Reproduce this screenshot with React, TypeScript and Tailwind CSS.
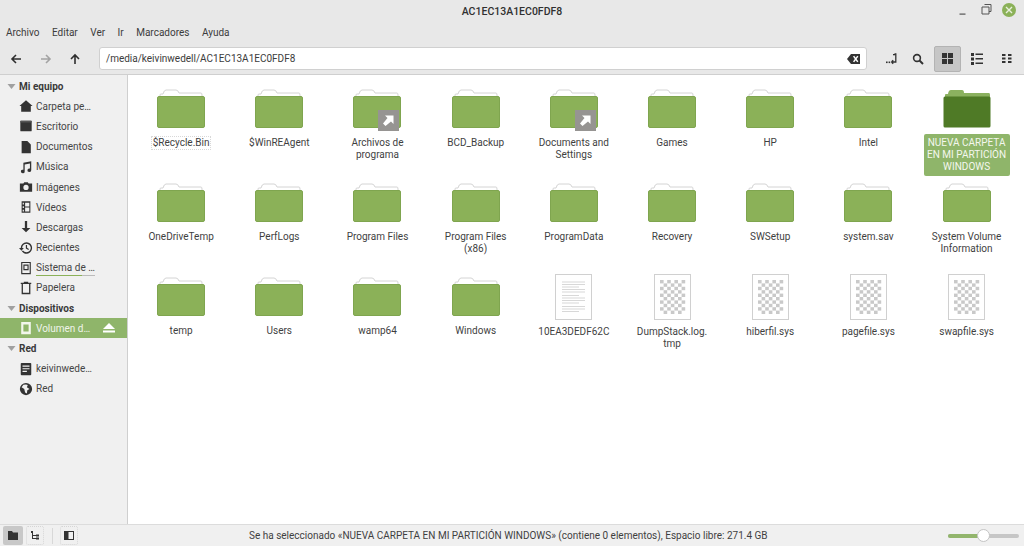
import React from "react";

const I = ({ children, size = 14, className = "" }: { children: React.ReactNode; size?: number; className?: string }) => (
  <svg width={size} height={size} viewBox="0 0 16 16" fill="currentColor" className={"shrink-0 " + className}>
    {children}
  </svg>
);

const Folder = ({ link, selected }: { link?: boolean; selected?: boolean }) => (
  <div className="relative w-[48px] h-[39px] shrink-0">
    <svg width="48" height="39" viewBox="0 0 48 39">
      {selected ? (
        <>
          <path d="M2 9 V6 Q2 5 3 5 H5 Q5.5 1 8 1 H19 Q21 1 21 4 H46 Q47 4 47 6 V10 H2 Z" fill="#8bb15f" />
          <rect x="0.5" y="7.5" width="47" height="31" rx="1.5" fill="#4f7a26" />
        </>
      ) : (
        <>
          <path d="M3 9 V6 Q3 5 4 5 H6 Q7 1 9 1 H19 Q21 1 22 4 H44 Q45 4 45 6 V9 Z" fill="#ffffff" stroke="#d4d4d4" strokeWidth="1" />
          <rect x="0.5" y="7.5" width="47" height="31" rx="1.5" fill="#8bb158" stroke="#7fa54f" strokeWidth="1" />
        </>
      )}
    </svg>
    {link && (
      <div className="absolute left-[25px] top-[21px] w-[21px] h-[21px] bg-[#969492] flex items-center justify-center">
        <svg width="13" height="13" viewBox="0 0 13 13">
          <path d="M3 1.5 H11.5 V10 L9 7.5 L3.5 12 L1 9.5 L5.5 4 Z" fill="#ffffff" />
        </svg>
      </div>
    )}
  </div>
);

const Doc = ({ text }: { text?: boolean }) => (
  <svg width="37" height="46" viewBox="0 0 37 46" className="shrink-0">
    <rect x="0.5" y="0.5" width="36" height="45" fill="#ffffff" stroke="#d0d0d0" />
    {text ? (
      <g stroke="#bdbdbd" strokeWidth="0.6">
        {[8, 10.5, 13, 15.5, 18, 21.5, 24, 26.5, 29, 32.5, 35, 37.5].map((y, i) => (
          <line key={y} x1="7" x2={i % 3 === 2 ? 24 : 30} y1={y} y2={y} />
        ))}
      </g>
    ) : (
      <g fill="#c9c9c9">
        {Array.from({ length: 10 }).flatMap((_, r) =>
          Array.from({ length: 7 }).map((_, c) =>
            (r + c) % 2 === 0 ? <rect key={r + "-" + c} x={6 + c * 3.6} y={6 + r * 3.4} width="3.6" height="3.4" /> : null
          )
        )}
      </g>
    )}
  </svg>
);

type Item = { n: string; k?: "link" | "sel" | "doc" | "bin"; focus?: boolean };
const items: Item[] = [
  { n: "$Recycle.Bin", focus: true },
  { n: "$WinREAgent" },
  { n: "Archivos de\nprograma", k: "link" },
  { n: "BCD_Backup" },
  { n: "Documents and\nSettings", k: "link" },
  { n: "Games" },
  { n: "HP" },
  { n: "Intel" },
  { n: "NUEVA CARPETA\nEN MI PARTICIÓN\nWINDOWS", k: "sel" },
  { n: "OneDriveTemp" },
  { n: "PerfLogs" },
  { n: "Program Files" },
  { n: "Program Files\n(x86)" },
  { n: "ProgramData" },
  { n: "Recovery" },
  { n: "SWSetup" },
  { n: "system.sav" },
  { n: "System Volume\nInformation" },
  { n: "temp" },
  { n: "Users" },
  { n: "wamp64" },
  { n: "Windows" },
  { n: "10EA3DEDF62C", k: "doc" },
  { n: "DumpStack.log.\ntmp", k: "bin" },
  { n: "hiberfil.sys", k: "bin" },
  { n: "pagefile.sys", k: "bin" },
  { n: "swapfile.sys", k: "bin" },
];

const side = {
  home: <path d="M8 1.5 L15.5 8 H13.5 V14.5 H2.5 V8 H0.5 Z" />,
  desk: <><rect x="1.5" y="2" width="13" height="12" rx="1" /><rect x="1.5" y="2" width="13" height="2" fill="#555" /></>,
  doc: <path d="M3 1 H9.5 L13.5 5 V15 H3 Z" />,
  music: <path d="M5 3 L14 1.5 V11.5 A2.2 2 0 1 1 12.5 9.8 V4 L6.5 5 V13 A2.2 2 0 1 1 5 11.2 Z" />,
  cam: <path fillRule="evenodd" d="M1 4 H5 L6 2.5 H10 L11 4 H15 V13.5 H1 Z M8 5.5 A3 3 0 1 0 8 11.5 A3 3 0 1 0 8 5.5 Z" />,
  film: <path fillRule="evenodd" d="M3 1.5 H13 V14.5 H3 Z M4.2 3 V5 H5.6 V3 Z M4.2 7 V9 H5.6 V7 Z M4.2 11 V13 H5.6 V11 Z M7 3 V7.4 H11.8 V3 Z M7 8.6 V13 H11.8 V8.6 Z" />,
  down: <path d="M6.7 1 H9.3 V9 H13 L8 14 L3 9 H6.7 Z" />,
  recent: <><path fillRule="evenodd" d="M8.5 1.5 A6.5 6.5 0 1 1 3.2 11.8 L4.5 10.8 A4.9 4.9 0 1 0 3.6 8 H5.5 L2.8 11 L0 8 H2 A6.5 6.5 0 0 1 8.5 1.5 Z" /><path d="M7.8 4.5 H9.2 V7.8 L11.4 9.2 L10.7 10.3 L7.8 8.5 Z" /></>,
  disk: <path fillRule="evenodd" d="M2.5 1 H13.5 V15 H2.5 Z M3.8 2.3 V13.7 H12.2 V2.3 Z M5 4 H11 V10.5 H5 Z M6.3 5.3 V9.2 H9.7 V5.3 Z" />,
  trash: <path fillRule="evenodd" d="M2 2 H14 V3.5 H13 V15 H3 V3.5 H2 Z M4.5 3.5 V13.5 H11.5 V3.5 Z M5.5 0.8 H10.5 V2 H5.5 Z" />,
  server: <path fillRule="evenodd" d="M3 1 H13 Q14 1 14 2 V14 Q14 15 13 15 H3 Q2 15 2 14 V2 Q2 1 3 1 Z M4 4 V5.3 H12 V4 Z M4 7 V8.3 H12 V7 Z M4 10 V11.3 H9 V10 Z" />,
  globe: <path fillRule="evenodd" d="M8 1 A7 7 0 1 1 8 15 A7 7 0 1 1 8 1 Z M5 3 L3 6 L6 8 L7 12 L9 13 L9.5 9.5 L12 8 L9 6 L10 3.5 L8 2.8 Z" />,
  vol: <path fillRule="evenodd" d="M2.5 1 H13.5 V15 H2.5 Z M5 4 V12 H11 V4 Z" />,
};

const Head = ({ t }: { t: string }) => (
  <div className="h-[20.2px] flex items-center pl-[7px] gap-[3px] font-bold text-[#3a3a3a]">
    <svg width="9" height="9" viewBox="0 0 9 9"><path d="M0.5 2 H8.5 L4.5 7 Z" fill="#a0a0a0" /></svg>
    <span>{t}</span>
  </div>
);

const Row = ({ icon, t, line }: { icon: React.ReactNode; t: string; line?: boolean }) => (
  <div className="h-[20.2px] flex items-center pl-[19px] gap-[3px]">
    <I className="text-[#333]">{icon}</I>
    <span className={line ? "relative" : ""}>
      {t}
      {line && <span className="absolute left-0 right-0 bottom-[-1px] h-[1px] bg-[linear-gradient(to_right,#8bb158_78%,#bbb_78%)]" />}
    </span>
  </div>
);

export default function App() {
  return (
    <div className="w-[1024px] h-[546px] flex flex-col overflow-hidden bg-[#f0f0f0] text-[#404040] text-[10px] font-['Roboto','Noto_Sans',sans-serif]">
      {/* title bar */}
      <div className="relative h-[21px] pt-[2px] bg-[#e8e8e8] flex items-center justify-center shrink-0">
        <span className="text-[#303030] font-medium text-[10.5px]">AC1EC13A1EC0FDF8</span>
        <div className="absolute right-[8px] top-[3px] flex items-center gap-[9px]">
          <svg width="13" height="14" viewBox="0 0 13 14" className="text-[#555]"><rect x="1.5" y="10.5" width="6" height="1.2" fill="currentColor" /></svg>
          <svg width="13" height="14" viewBox="0 0 13 14" className="text-[#555]"><path d="M4.5 1.5 H11 V8.5 H9 M2 4 H9 V11 H2 Z" fill="none" stroke="currentColor" strokeWidth="1" /></svg>
          <div className="w-[14px] h-[14px] rounded-full bg-[#8bb158] flex items-center justify-center">
            <svg width="8" height="8" viewBox="0 0 8 8"><path d="M1 1 L7 7 M7 1 L1 7" stroke="#e8f0dc" strokeWidth="1.4" /></svg>
          </div>
        </div>
      </div>
      {/* menu */}
      <div className="h-[22px] pt-[1px] bg-[#e8e8e8] flex items-center pl-[6px] gap-[12.5px] shrink-0 text-[#3c3c3c]">
        {["Archivo", "Editar", "Ver", "Ir", "Marcadores", "Ayuda"].map((m) => (
          <span key={m}>{m}</span>
        ))}
      </div>
      {/* toolbar */}
      <div className="h-[32px] bg-[#e8e8e8] flex items-center border-b border-[#cfcfcf] shrink-0">
        <div className="w-[99px] flex items-center pl-[10px] gap-[17.5px] text-[#2e2e2e]">
          <svg width="12" height="12" viewBox="0 0 12 12"><path d="M11 6 H3 M6 2 L2 6 L6 10" fill="none" stroke="currentColor" strokeWidth="1.6" /></svg>
          <svg width="12" height="12" viewBox="0 0 12 12" className="text-[#a3a3a3]"><path d="M1 6 H9 M6 2 L10 6 L6 10" fill="none" stroke="currentColor" strokeWidth="1.6" /></svg>
          <svg width="12" height="12" viewBox="0 0 12 12"><path d="M6 11 V3 M2 6 L6 2 L10 6" fill="none" stroke="currentColor" strokeWidth="1.6" /></svg>
        </div>
        <div className="w-[768px] h-[23px] bg-white border border-[#d0d0d0] rounded-[3px] flex items-center justify-between px-[6px] text-[#3c3c3c]">
          <span>/media/keivinwedell/AC1EC13A1EC0FDF8</span>
          <svg width="13" height="10" viewBox="0 0 13 10" className="text-[#333]">
            <path fillRule="evenodd" d="M4 0 H13 V10 H4 L0 5 Z M6 2.5 L7.2 1.8 L8.7 3.8 L10.2 1.8 L11.4 2.5 L9.6 5 L11.4 7.5 L10.2 8.2 L8.7 6.2 L7.2 8.2 L6 7.5 L7.8 5 Z" fill="currentColor" />
          </svg>
        </div>
        <div className="flex-1 flex items-center pl-[18px] text-[#333]">
          <svg width="12" height="12" viewBox="0 0 12 12" className="mr-[15px]"><path d="M9.5 1 H10.8 V9 H6.5 M6.5 9 L8.2 7.2 M6.5 9 L8.2 10.8" fill="none" stroke="currentColor" strokeWidth="1.3" /><rect x="1" y="8.5" width="1.6" height="1.6" fill="currentColor" /><rect x="3.6" y="8.5" width="1.6" height="1.6" fill="currentColor" /><rect x="8" y="1" width="2" height="1.3" fill="currentColor" /></svg>
          <svg width="12" height="12" viewBox="0 0 12 12" className="mr-[10px]"><circle cx="5" cy="5" r="3.4" fill="none" stroke="currentColor" strokeWidth="1.6" /><path d="M7.5 7.5 L11 11" stroke="currentColor" strokeWidth="2" /></svg>
          <div className="w-[27px] h-[26px] bg-[#c6c6c6] border border-[#b3b3b3] rounded-[2px] flex items-center justify-center mr-[10px]">
            <svg width="11" height="11" viewBox="0 0 11 11" fill="currentColor"><rect width="5" height="5" /><rect x="6" width="5" height="5" /><rect y="6" width="5" height="5" /><rect x="6" y="6" width="5" height="5" /></svg>
          </div>
          <svg width="12" height="12" viewBox="0 0 12 12" fill="currentColor" className="mr-[19px]"><rect width="3" height="3" /><rect y="4.5" width="3" height="3" /><rect y="9" width="3" height="3" /><rect x="4.5" y="0.5" width="7.5" height="1.5" /><rect x="4.5" y="5" width="7.5" height="1.5" /><rect x="4.5" y="9.5" width="7.5" height="1.5" /></svg>
          <svg width="10" height="9" viewBox="0 0 10 9" fill="currentColor"><rect width="3.5" height="2" /><rect x="6" width="3.5" height="2" /><rect y="3.5" width="3.5" height="2" /><rect x="6" y="3.5" width="3.5" height="2" /><rect y="7" width="3.5" height="2" /><rect x="6" y="7" width="3.5" height="2" /></svg>
        </div>
      </div>
      {/* body */}
      <div className="flex-1 min-h-0 flex">
        <div className="w-[128px] shrink-0 bg-[#f0f0f0] border-r border-[#cfcfcf] pt-[1px] text-[#454545]">
          <Head t="Mi equipo" />
          <Row icon={side.home} t="Carpeta pe…" />
          <Row icon={side.desk} t="Escritorio" />
          <Row icon={side.doc} t="Documentos" />
          <Row icon={side.music} t="Música" />
          <Row icon={side.cam} t="Imágenes" />
          <Row icon={side.film} t="Vídeos" />
          <Row icon={side.down} t="Descargas" />
          <Row icon={side.recent} t="Recientes" />
          <Row icon={side.disk} t="Sistema de …" line />
          <Row icon={side.trash} t="Papelera" />
          <Head t="Dispositivos" />
          <div className="h-[20.2px] flex items-center pl-[19px] gap-[3px] bg-[#8fb56a] text-[#f0f4ea] relative">
            <I className="text-[#f2f6ec]">{side.vol}</I>
            <span>Volumen d…</span>
            <svg width="12" height="10" viewBox="0 0 12 10" className="absolute right-[12px] top-[5px]" fill="#fff"><path d="M6 0 L12 6 H0 Z" /><rect y="7.5" width="12" height="2" /></svg>
          </div>
          <Head t="Red" />
          <Row icon={side.server} t="keivinwede…" />
          <Row icon={side.globe} t="Red" />
        </div>
        <div className="flex-1 bg-white pl-[4px] grid grid-cols-[repeat(9,98.2px)] grid-rows-[repeat(3,94px)] content-start">
          {items.map((it) => {
            const isDoc = it.k === "doc" || it.k === "bin";
            return (
              <div key={it.n} className="flex flex-col items-center min-w-0">
                <div className={"shrink-0 flex items-end " + (isDoc ? "h-[57px]" : "h-[53px]")}>
                  {isDoc ? <Doc text={it.k === "doc"} /> : <Folder link={it.k === "link"} selected={it.k === "sel"} />}
                </div>
                <div
                  className={
                    "text-center whitespace-pre-line leading-[12px] " +
                    (isDoc ? "mt-[6px] " : "mt-[9px] ") +
                    (it.k === "sel"
                      ? "w-[86px] bg-[#8fb56a] text-[#f4f7ee] rounded-[2px] py-[3px] !mt-[6px] relative z-10"
                      : it.focus
                      ? "px-[1px] outline outline-1 outline-dotted outline-[#d8d8d8] text-[#3f3f3f]"
                      : "text-[#3f3f3f]")
                  }
                >
                  {it.n}
                </div>
              </div>
            );
          })}
        </div>
      </div>
      {/* status */}
      <div className="h-[22px] bg-[#f0f0f0] border-t border-[#dcdcdc] shrink-0 relative flex items-center text-[#3f3f3f]">
        <div className="flex items-center pl-[3px] gap-[3px] w-[249px]">
          <div className="w-[20px] h-[19px] rounded-[2px] bg-[#c8c8c8] flex items-center justify-center">
            <svg width="10" height="9" viewBox="0 0 10 9" fill="#333"><path d="M0 0 H4 L5 1.5 H10 V9 H0 Z" /></svg>
          </div>
          <div className="w-[18px] h-[19px] rounded-[2px] border border-dotted border-[#d5d5d5] flex items-center justify-center">
            <svg width="10" height="10" viewBox="0 0 10 10" fill="#333"><rect x="1" y="0" width="2" height="2" /><rect x="2" y="2" width="1" height="6" /><rect x="3" y="4" width="3" height="1" /><rect x="3" y="7" width="3" height="1" /><rect x="6" y="3.5" width="3" height="2" /><rect x="6" y="6.5" width="3" height="2" /></svg>
          </div>
          <div className="w-[1px] h-[16px] bg-[#d8d8d8] ml-[5px] mr-[4px]" />
          <div className="w-[18px] h-[19px] rounded-[2px] border border-dotted border-[#d5d5d5] flex items-center justify-center">
            <svg width="10" height="9" viewBox="0 0 10 9"><rect x="0.5" y="0.5" width="9" height="8" fill="none" stroke="#333" /><rect x="1" y="1" width="3.5" height="7" fill="#333" /></svg>
          </div>
        </div>
        <span className="whitespace-nowrap">Se ha seleccionado «NUEVA CARPETA EN MI PARTICIÓN WINDOWS» (contiene 0 elementos), Espacio libre: 271.4 GB</span>
        <div className="absolute left-[948px] top-[9px] w-[71px] h-[4px] rounded-full bg-[#c6c6c6]">
          <div className="h-full w-[32px] rounded-full bg-[#92b56c]" />
          <div className="absolute left-[29px] top-[-5px] w-[13px] h-[13px] rounded-full bg-white border border-[#c4c4c4]" />
        </div>
      </div>
    </div>
  );
}
